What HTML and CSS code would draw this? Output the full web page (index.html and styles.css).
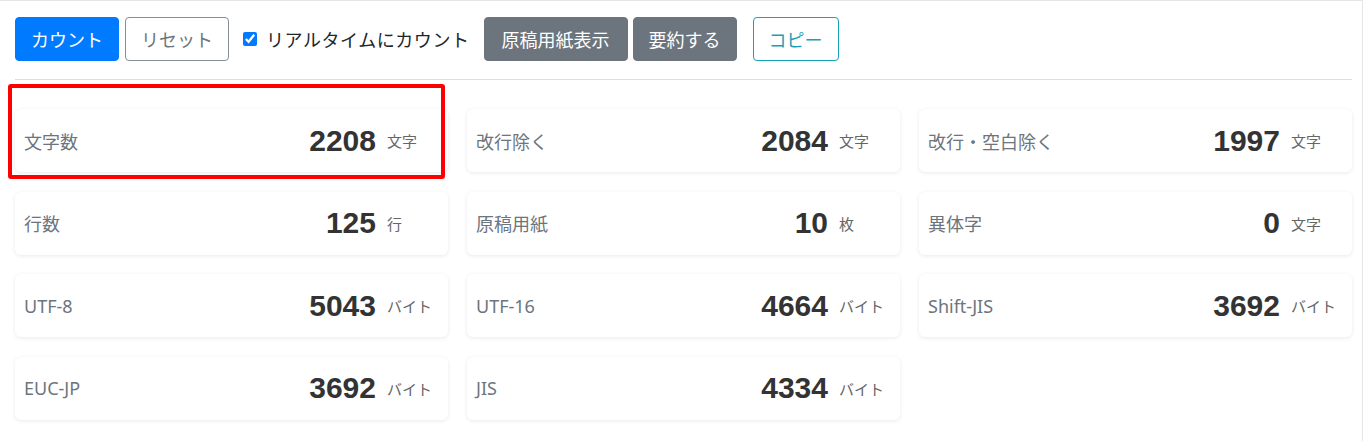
FILE: index.html
```html
<!DOCTYPE html>
<html lang="ja">
<head>
<meta charset="utf-8">
<title>文字数カウント</title>
<link rel="stylesheet" href="styles.css">
</head>
<body>
<div class="panel">
  <div class="toolbar">
    <button class="btn btn-primary">カウント</button>
    <button class="btn btn-outline-secondary gap-s">リセット</button>
    <label class="check gap-m"><input type="checkbox" checked><span>リアルタイムにカウント</span></label>
    <button class="btn btn-secondary btn-wide gap-m">原稿用紙表示</button>
    <button class="btn btn-secondary gap-xs">要約する</button>
    <button class="btn btn-outline-info gap-l">コピー</button>
  </div>
  <div class="divider"></div>
  <div class="stats">
    <div class="card highlighted"><span class="label">文字数</span><span class="num">2208</span><span class="unit">文字</span><div class="mark"></div></div>
    <div class="card"><span class="label">改行除く</span><span class="num">2084</span><span class="unit">文字</span></div>
    <div class="card"><span class="label">改行・空白除く</span><span class="num">1997</span><span class="unit">文字</span></div>
    <div class="card"><span class="label">行数</span><span class="num">125</span><span class="unit">行</span></div>
    <div class="card"><span class="label">原稿用紙</span><span class="num">10</span><span class="unit">枚</span></div>
    <div class="card"><span class="label">異体字</span><span class="num">0</span><span class="unit">文字</span></div>
    <div class="card"><span class="label">UTF-8</span><span class="num">5043</span><span class="unit">バイト</span></div>
    <div class="card"><span class="label">UTF-16</span><span class="num">4664</span><span class="unit">バイト</span></div>
    <div class="card"><span class="label">Shift-JIS</span><span class="num">3692</span><span class="unit">バイト</span></div>
    <div class="card"><span class="label">EUC-JP</span><span class="num">3692</span><span class="unit">バイト</span></div>
    <div class="card"><span class="label">JIS</span><span class="num">4334</span><span class="unit">バイト</span></div>
  </div>
</div>
</body>
</html>
```

FILE: styles.css
```css
* { box-sizing: border-box; }
html, body { margin: 0; padding: 0; background: #fff; }
body {
  font-family: "Noto Sans", "Noto Sans CJK JP", sans-serif;
  color: #212529;
}
.panel {
  width: 1363px;
  border-top: 1px solid #e4e6e8;
  border-right: 1px solid #e4e6e8;
  padding: 16px 10px 20px 15px;
  min-height: 441px;
}
.toolbar {
  display: flex;
  align-items: center;
  height: 44px;
}
.btn {
  height: 44px;
  padding: 0 15px;
  font-family: "Noto Sans CJK JP", sans-serif;
  font-size: 18px;
  line-height: 1;
  border: 1px solid transparent;
  border-radius: 4px;
  background: #fff;
  cursor: pointer;
  white-space: nowrap;
}
.btn-primary { background: #007bff; border-color: #007bff; color: #fff; }
.btn-secondary { background: #6c757d; border-color: #6c757d; color: #fff; }
.btn-wide { padding: 0 17px; }
.btn-outline-secondary { border-color: #868e96; color: #6c757d; }
.btn-outline-info { border-color: #17a2b8; color: #17a2b8; padding: 0 15px; }
.gap-xs { margin-left: 5px; }
.gap-s { margin-left: 6px; }
.gap-m { margin-left: 14px; }
.gap-l { margin-left: 16px; }
.check {
  display: flex;
  align-items: center;
  font-family: "Noto Sans CJK JP", sans-serif;
  font-size: 18px;
  letter-spacing: 0.55px;
  color: #212529;
}
.check input {
  width: 14px;
  height: 14px;
  margin: 0 9px 0 0;
  accent-color: #007bff;
}
.divider {
  height: 1px;
  background: #dedede;
  margin: 18px 0 29px;
}
.stats {
  display: grid;
  grid-template-columns: repeat(3, 1fr);
  column-gap: 19px;
  row-gap: 19.5px;
}
.card {
  position: relative;
  height: 63px;
  display: flex;
  align-items: center;
  padding: 0 8px 0 9px;
  background: #fff;
  border-radius: 6px;
  box-shadow: 0 1px 4px rgba(0, 0, 0, 0.09);
}
.label {
  flex: 1;
  font-size: 18px;
  color: #6c757d;
  font-family: "Noto Sans", "Noto Sans CJK JP", sans-serif;
}
.num {
  font-family: "Liberation Sans", Arial, sans-serif;
  font-weight: bold;
  font-size: 30px;
  color: #333;
}
.unit {
  width: 53px;
  margin-left: 11px;
  font-family: "Noto Sans CJK JP", sans-serif;
  font-size: 15px;
  color: #666;
}
.mark {
  position: absolute;
  top: -25px;
  left: -7px;
  width: 437px;
  height: 95px;
  border: 4px solid #ff0000;
  border-radius: 3px;
  pointer-events: none;
}
```
